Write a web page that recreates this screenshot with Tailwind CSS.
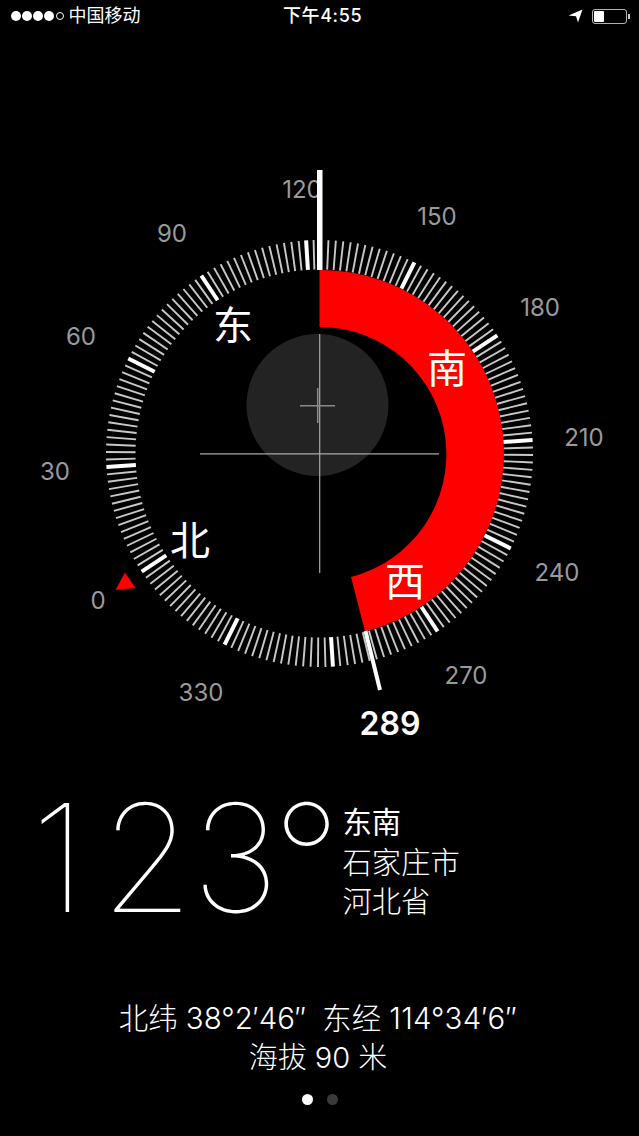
<!DOCTYPE html>
<html lang="zh-CN">
<head>
    <meta charset="UTF-8">
    <meta name="viewport" content="width=device-width, initial-scale=1.0">
    <title>指南针</title>
    <script src="https://cdn.jsdelivr.net/npm/@tailwindcss/browser@4"></script>
</head>
<body class="bg-black text-white font-['Inter','Noto_Sans_CJK_SC',sans-serif]">
<div class="w-[639px] h-[1136px] overflow-hidden flex flex-col">

    <!-- Status bar -->
    <div class="h-8 flex items-center justify-between pl-[11px] pr-[9px] relative text-[18px] leading-none">
        <div class="flex items-center">
            <div class="flex items-center gap-[1px]">
                <span class="w-[10px] h-[10px] rounded-full bg-white"></span>
                <span class="w-[10px] h-[10px] rounded-full bg-white"></span>
                <span class="w-[10px] h-[10px] rounded-full bg-white"></span>
                <span class="w-[10px] h-[10px] rounded-full bg-white"></span>
                <span class="w-[8px] h-[8px] ml-[0.5px] rounded-full border border-white"></span>
            </div>
            <span class="ml-[5px]">中国移动</span>
        </div>
        <span class="absolute left-[283px] top-[7px] font-medium tracking-[0.6px]">下午4:55</span>
        <div class="flex items-center gap-[9px]">
            <svg width="15" height="14" viewBox="0 0 15 14"><path d="M14.5 0.5 L0.5 6.5 L8 7.2 L10 13.5 Z" fill="#fff"/></svg>
            <div class="flex items-center">
                <div class="w-[35px] h-[15px] rounded-[3px] border border-white/70 p-[1px]">
                    <div class="w-[10px] h-full bg-white rounded-[1px]"></div>
                </div>
                <div class="w-[2px] h-[5px] ml-[1px] bg-white/80"></div>
            </div>
        </div>
    </div>

    <!-- Compass dial -->
    <div class="relative h-[728px]">
        <svg id="dial" width="639" height="728" viewBox="0 32 639 728" class="absolute left-0 top-0" font-size="24" text-anchor="middle">
            <g id="ticks"></g>
            <path d="M319.5 270 A183.5 183.5 0 0 1 365 631.5 L351 577 A127 127 0 0 0 319.5 327 Z" fill="#f00"/>
            <circle cx="317.5" cy="405" r="71" fill="#232323"/>
            <path d="M200 453.8H439M319.7 334V573" stroke="#a8a8a8" stroke-width="1.2"/>
            <path d="M300 405.7H335M317.7 388V423" stroke="#8a8a8a" stroke-width="1.5"/>
            <g fill="#9a9a9a">
                <text x="302" y="198">120</text>
                <text x="437" y="225">150</text>
                <text x="540" y="316">180</text>
                <text x="584" y="446">210</text>
                <text x="557" y="581">240</text>
                <text x="466" y="684">270</text>
                <text x="201" y="701">330</text>
                <text x="98" y="609">0</text>
                <text x="55" y="480">30</text>
                <text x="81" y="345">60</text>
                <text x="172" y="242">90</text>
            </g>
            <rect x="317" y="170" width="5.5" height="100" fill="#fff"/>
            <path d="M365.5 631 L380 690" stroke="#fff" stroke-width="4"/>
            <path d="M125 572.5 L115.5 590 L135.5 588 Z" fill="#f00"/>
            <g fill="#fff" font-size="40">
                <text x="233" y="340">东</text>
                <text x="447" y="383">南</text>
                <text x="405" y="596">西</text>
                <text x="190" y="555">北</text>
            </g>
            <text x="390" y="735" fill="#fff" font-size="32" font-weight="600">289</text>
        </svg>
    </div>

    <!-- Heading readout -->
    <div class="flex items-start pl-[31px] h-[200px]">
        <div class="text-[150px] leading-none font-thin w-[311.5px] mt-[23px] whitespace-nowrap"><span class="tracking-[14.5px]">1</span><span class="tracking-[-2px]">2</span><span class="tracking-[-6.5px]">3</span>°</div>
        <div class="text-[29.3px] leading-[39.5px] mt-[43px]">
            <div class="font-normal">东南</div>
            <div class="font-light">石家庄市</div>
            <div class="font-light">河北省</div>
        </div>
    </div>

    <!-- Coordinates -->
    <div class="text-center text-[29.4px] leading-[39px] font-light mt-[38.5px]">
        <div class="flex justify-center pr-[3px]">
            <span>北纬 38°2′46″</span>
            <span class="ml-[16px]">东经 <span class="tracking-[0.25px]">114°34′6″</span></span>
        </div>
        <div class="text-[29px] pr-[3px]">海拔 90 米</div>
    </div>

    <!-- Page dots -->
    <div class="flex justify-center gap-[14px] mt-[17.5px]">
        <span class="w-[11px] h-[11px] rounded-full bg-white"></span>
        <span class="w-[11px] h-[11px] rounded-full bg-[#3a3a3a]"></span>
    </div>
</div>

<script>
    // Ticks every 2 degrees, heavier every 30, dial turned to the current heading
    const heading = 123.6;
    const cx = 319.5, cy = 453.5;
    const g = document.getElementById('ticks');
    for (let deg = 0; deg < 360; deg += 2) {
        const a = (deg - heading) * Math.PI / 180;
        const major = deg % 30 === 0;
        const line = document.createElementNS('http://www.w3.org/2000/svg', 'line');
        line.setAttribute('x1', cx + 184 * Math.sin(a));
        line.setAttribute('y1', cy - 184 * Math.cos(a));
        line.setAttribute('x2', cx + 213.5 * Math.sin(a));
        line.setAttribute('y2', cy - 213.5 * Math.cos(a));
        line.setAttribute('stroke', major ? '#fff' : '#c8c8c8');
        line.setAttribute('stroke-width', major ? 4 : 1.9);
        g.appendChild(line);
    }
</script>
</body>
</html>
